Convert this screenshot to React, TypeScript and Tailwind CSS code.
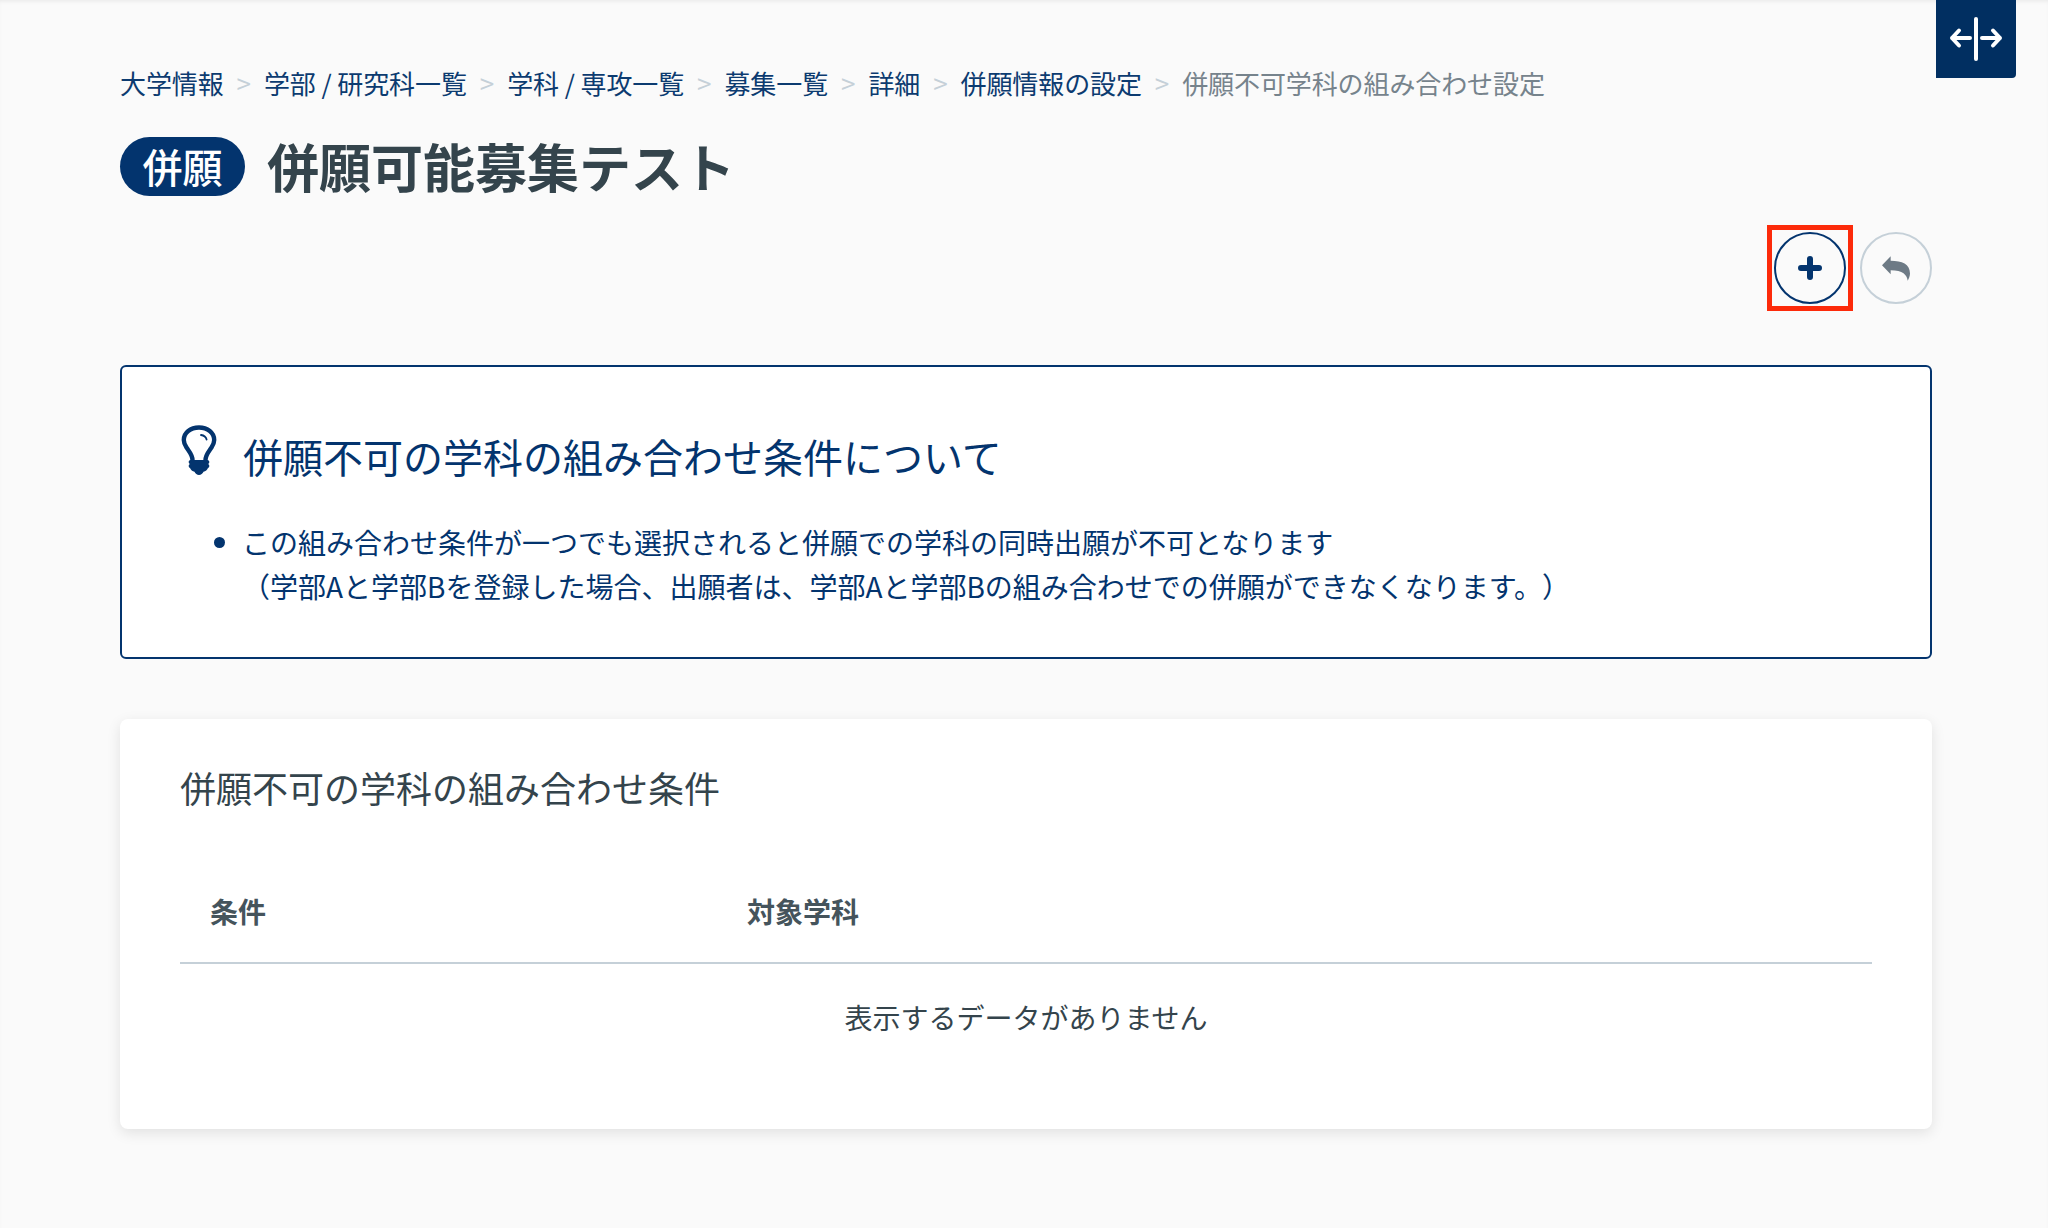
const crumbs = ['大学情報', '学部 / 研究科一覧', '学科 / 専攻一覧', '募集一覧', '詳細', '併願情報の設定'];

function BulbIcon() {
  return (
    <svg width="36" height="52" viewBox="0 0 36 52" fill="none" className="shrink-0">
      <path
        d="M11.500 35c0-5-3-8-6-12.500C3.500 19.500 2.800 16.500 2.800 15 2.800 7.500 9.500 2.500 18 2.500S33.200 7.500 33.200 15c0 1.500-.7 4.500-2.700 7.500-3 4.500-6 7.500-6 12.500"
        stroke="#03346e"
        strokeWidth="4.4"
        strokeLinecap="round"
      />
      <path d="M20 10c3 .4 5 2 5.600 4.500" stroke="#03346e" strokeWidth="1.800" strokeLinecap="round" />
      <path
        d="M9.500 35h17c1.200 0 1.800 1 1.800 2s-.6 1.700-1.300 2c.7.400 1.300 1 1.300 2s-.6 1.700-1.300 2c-.7 2-2.500 3.300-4.500 3.700C21.700 48.500 20 50 18 50s-3.700-1.500-4.500-3.300c-2-.4-3.800-1.700-4.500-3.700-.7-.3-1.300-1-1.300-2s.6-1.600 1.300-2c-.7-.3-1.300-1-1.300-2s.6-2 1.800-2z"
        fill="#03346e"
      />
    </svg>
  );
}

export default function App() {
  return (
    <div className="relative min-h-[1228px] bg-[#fafafa] pl-[120px] pr-[116px] pt-[61px] font-['Noto_Sans_CJK_JP',sans-serif] shadow-[inset_0_3px_4px_-2px_rgba(0,0,0,0.08)]">
      <button
        type="button"
        className="absolute right-[32px] top-0 flex h-[78px] w-[80px] items-center justify-center rounded-br-[4px] bg-[#012f61]"
      >
        <svg width="54" height="44" viewBox="0 0 54 44" fill="none" stroke="#fff" strokeWidth="4" strokeLinecap="round" strokeLinejoin="round">
          <path d="M27 2v40" />
          <path d="M21 21H3M10 13.500 3 21l7 7.500" />
          <path d="M33 21h18M44 13.500 51 21l-7 7.500" />
        </svg>
      </button>

      <nav className="flex h-[44px] items-center text-[26px] leading-[44px] tracking-[-0.1px]">
        {crumbs.map((c) => (
          <span key={c} className="flex items-center">
            <span className="text-[#0c3b70]">{c}</span>
            <span className="mx-[13px] text-[#c5d0d8]">&gt;</span>
          </span>
        ))}
        <span className="text-[#76838c]">併願不可学科の組み合わせ設定</span>
      </nav>

      <div className="mt-[31px] flex items-center">
        <span className="flex h-[59px] w-[125px] items-center justify-center rounded-full bg-[#03346e] text-[40px] font-medium text-white">
          併願
        </span>
        <h1 className="ml-[22px] text-[52px] leading-[60px] font-bold text-[#34444c]">併願可能募集テスト</h1>
      </div>

      <div className="mt-[29px] flex items-center justify-end gap-[7px]">
        <div className="border-[5px] border-[#fc2a0a] p-[2px]">
          <button type="button" className="flex h-[72px] w-[72px] items-center justify-center rounded-full border-2 border-[#03346e]">
            <svg width="24" height="24" viewBox="0 0 24 24" fill="none" stroke="#03346e" strokeWidth="6" strokeLinecap="round">
              <path d="M12 3v18M3 12h18" />
            </svg>
          </button>
        </div>
        <button type="button" className="flex h-[72px] w-[72px] items-center justify-center rounded-full border-2 border-[#c5d0d8]">
          <svg width="28" height="25" viewBox="0 0 84 74" fill="#6d7a85">
            <path d="M0 27 26 0v14c34 0 58 10 58 38 0 8-4 16-7 22-1-18-15-32-51-32v12z" />
          </svg>
        </button>
      </div>

      <section className="mt-[54px] h-[294px] rounded-[6px] border-2 border-[#03346e] bg-white pl-[59px] pt-[58px] text-[#03346e]">
        <div className="flex items-start">
          <BulbIcon />
          <h2 className="ml-[26px] mt-[4px] text-[40px] leading-[54px]">併願不可の学科の組み合わせ条件について</h2>
        </div>
        <div className="mt-[37px] flex">
          <span className="ml-[33px] mt-[17px] h-[11px] w-[11px] shrink-0 rounded-full bg-[#03346e]" />
          <p className="ml-[17px] text-[28px] leading-[44px] [text-spacing-trim:space-all]">
            この組み合わせ条件が一つでも選択されると併願での学科の同時出願が不可となります
            <br />
            （学部Aと学部Bを登録した場合、出願者は、学部Aと学部Bの組み合わせでの併願ができなくなります。）
          </p>
        </div>
      </section>

      <section className="mt-[60px] h-[410px] rounded-[8px] bg-white px-[60px] pt-[41px] shadow-[0_4px_14px_rgba(0,0,0,0.1)]">
        <h2 className="text-[36px] leading-[54px] text-[#34444c]">併願不可の学科の組み合わせ条件</h2>
        <table className="mt-[49px] w-full border-collapse">
          <thead>
            <tr className="border-b-2 border-[#c5d0d8] text-left text-[28px] font-bold text-[#45545c]">
              <th className="h-[100px] w-[567px] pb-[4px] pl-[30px] font-bold">条件</th>
              <th className="h-[100px] pb-[4px] font-bold">対象学科</th>
            </tr>
          </thead>
          <tbody>
            <tr>
              <td colSpan={2} className="h-[106px] text-center text-[28px] text-[#34444c]">
                表示するデータがありません
              </td>
            </tr>
          </tbody>
        </table>
      </section>
    </div>
  );
}
